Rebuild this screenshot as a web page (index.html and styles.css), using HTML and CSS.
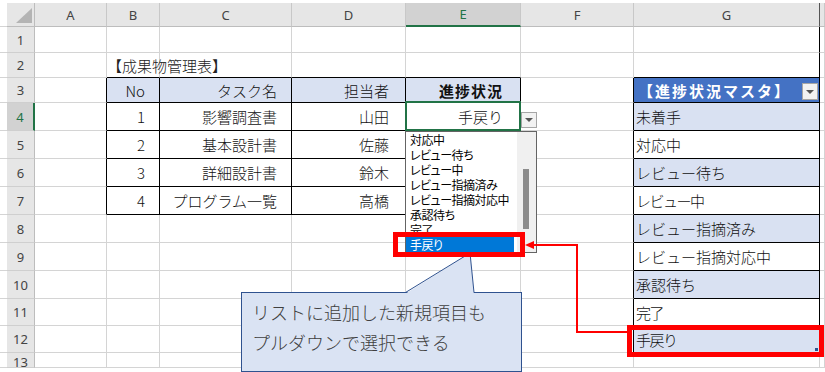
FILE: index.html
```html
<!DOCTYPE html>
<html lang="ja">
<head>
  <meta charset="UTF-8" />
  <meta name="viewport" content="width=device-width, initial-scale=1.0" />
  <title>成果物管理表</title>
  <link rel="stylesheet" href="styles.css">
</head>
<body>
<div class="page">

  <div class="sheet">
    <div class="row hdr">
      <div class="edge"></div>
      <div class="corner"><span></span></div>
      <div class="ch">A</div>
      <div class="ch">B</div>
      <div class="ch">C</div>
      <div class="ch">D</div>
      <div class="ch sel">E</div>
      <div class="ch">F</div>
      <div class="ch g">G</div>
      <div class="ch"></div>
    </div>

    <div class="row h26">
      <div class="edge"></div><div class="rh">1</div>
      <div></div><div></div><div></div><div></div><div></div><div></div><div class="kr"></div><div></div>
    </div>

    <div class="row h25">
      <div class="edge"></div><div class="rh">2</div>
      <div></div>
      <div class="kb title">【成果物管理表】</div>
      <div class="kb"></div><div class="kb"></div><div class="kb"></div>
      <div></div>
      <div class="k"></div>
      <div></div>
    </div>

    <div class="row h25">
      <div class="edge"></div><div class="rh">3</div>
      <div class="kr"></div>
      <div class="k th num">No</div>
      <div class="k th name">タスク名</div>
      <div class="k th who">担当者</div>
      <div class="k th stat bold">進捗状況</div>
      <div class="kr"></div>
      <div class="k master-head">【進捗状況マスタ】<span class="dd"></span></div>
      <div></div>
    </div>

    <div class="row">
      <div class="edge"></div><div class="rh sel">4</div>
      <div class="kr"></div>
      <div class="k num">1</div>
      <div class="k name">影響調査書</div>
      <div class="k who">山田</div>
      <div class="k stat active">手戻り</div>
      <div class="kr"></div>
      <div class="k m band">未着手</div>
      <div></div>
    </div>

    <div class="row">
      <div class="edge"></div><div class="rh">5</div>
      <div class="kr"></div>
      <div class="k num">2</div>
      <div class="k name">基本設計書</div>
      <div class="k who">佐藤</div>
      <div class="k"></div>
      <div class="kr"></div>
      <div class="k m">対応中</div>
      <div></div>
    </div>

    <div class="row">
      <div class="edge"></div><div class="rh">6</div>
      <div class="kr"></div>
      <div class="k num">3</div>
      <div class="k name">詳細設計書</div>
      <div class="k who">鈴木</div>
      <div class="k"></div>
      <div class="kr"></div>
      <div class="k m band">レビュー待ち</div>
      <div></div>
    </div>

    <div class="row">
      <div class="edge"></div><div class="rh">7</div>
      <div class="kr"></div>
      <div class="k num">4</div>
      <div class="k name">プログラム一覧</div>
      <div class="k who">高橋</div>
      <div class="k"></div>
      <div class="kr"></div>
      <div class="k m tight">レビュー中</div>
      <div></div>
    </div>

    <div class="row">
      <div class="edge"></div><div class="rh">8</div>
      <div></div><div></div><div></div><div></div><div></div>
      <div class="kr"></div>
      <div class="k m band">レビュー指摘済み</div>
      <div></div>
    </div>

    <div class="row">
      <div class="edge"></div><div class="rh">9</div>
      <div></div><div></div><div></div><div></div><div></div>
      <div class="kr"></div>
      <div class="k m">レビュー指摘対応中</div>
      <div></div>
    </div>

    <div class="row">
      <div class="edge"></div><div class="rh">10</div>
      <div></div><div></div><div></div><div></div><div></div>
      <div class="kr"></div>
      <div class="k m band">承認待ち</div>
      <div></div>
    </div>

    <div class="row h27">
      <div class="edge"></div><div class="rh">11</div>
      <div></div><div></div><div></div><div></div><div></div>
      <div class="kr"></div>
      <div class="k m tight">完了</div>
      <div></div>
    </div>

    <div class="row h27">
      <div class="edge"></div><div class="rh">12</div>
      <div></div><div></div><div></div><div></div><div></div>
      <div class="kr"></div>
      <div class="k m band tight last">手戻り</div>
      <div></div>
    </div>

    <div class="row h15">
      <div class="edge"></div><div class="rh low">13</div>
      <div></div><div></div><div></div><div></div><div></div><div></div><div></div><div></div>
    </div>
  </div>

  <!-- validation dropdown on E4 -->
  <span class="dd drop-btn"></span>
  <div class="list">
    <ul class="items">
      <li>対応中</li>
      <li>レビュー待ち</li>
      <li>レビュー中</li>
      <li>レビュー指摘済み</li>
      <li>レビュー指摘対応中</li>
      <li>承認待ち</li>
      <li>完了</li>
      <li class="picked">手戻り</li>
    </ul>
    <div class="track"><div class="thumb"></div></div>
  </div>

  <!-- callout -->
  <div class="callout">
    <svg class="tail" width="72" height="43" viewBox="0 0 72 43">
      <polygon points="0,42 65,1 69,42" fill="#dae3f3" />
      <polyline points="0.5,40.5 65,1 69,40.5" fill="none" stroke="#2f528f" stroke-width="1" />
    </svg>
    <p>リストに追加した新規項目も<br>プルダウンで選択できる</p>
  </div>

  <!-- red marks -->
  <svg class="marks" width="825" height="372" viewBox="0 0 825 372">
    <rect x="395.5" y="234.5" width="127" height="20" fill="none" stroke="#ff0000" stroke-width="5" />
    <rect x="629.5" y="327.5" width="192" height="27" fill="none" stroke="#ff0000" stroke-width="5" />
    <path d="M627 332 H577 V245 H532" fill="none" stroke="#ff0000" stroke-width="2" />
    <polygon points="525,245 534,241 534,249" fill="#ff0000" />
  </svg>

</div>
</body>
</html>
```

FILE: styles.css
```css
:root {
  --grid: #d4d4d4;
  --head: #e6e6e6;
  --head-sel: #d2d2d2;
  --green: #217346;
  --band: #d9e1f2;
  --blue: #4472c4;
}
body {
  margin: 0;
  background: #fff;
  font-family: "Noto Sans CJK JP", sans-serif;
}
.page {
  position: relative;
  width: 825px;
  height: 372px;
  overflow: hidden;
}
.sheet {
  padding-top: 3px;
}
.row {
  display: grid;
  grid-template-columns: 7px 28px 72px 53px 132px 114px 115px 113px 186px 5px;
  height: 28px;
}
.row.hdr { height: 24px; }
.row.h26 { height: 26px; }
.row.h25 { height: 25px; }
.row.h27 { height: 27px; }
.row.h15 { height: 15px; }

.row > div {
  box-sizing: border-box;
  border-right: 1px solid var(--grid);
  border-bottom: 1px solid var(--grid);
  display: flex;
  align-items: center;
  white-space: nowrap;
  overflow: hidden;
  font-size: 15px;
  font-weight: 300;
  color: #111;
}
.row > .edge { border-right: none; }

/* headers */
.row > .ch, .row > .rh, .row > .corner {
  background: var(--head);
  justify-content: center;
  font-family: "Noto Sans", sans-serif;
  font-size: 13px;
  font-weight: 400;
  color: #444;
}
.row > .ch { border-right-color: #c8c8c8; border-bottom-color: #bdbdbd; }
.row > .rh { border-right-color: #bdbdbd; border-bottom-color: #cfcfcf; }
.row > .rh.low { align-items: flex-start; }
.row > .ch.g { border-right-color: #555; }
.row > .ch.sel {
  background: var(--head-sel);
  border-bottom: 2px solid var(--green);
  color: var(--green);
}
.row > .rh.sel {
  background: var(--head-sel);
  border-right: 2px solid var(--green);
  color: var(--green);
}
.row > .corner {
  border-right-color: #bdbdbd;
  border-bottom-color: #bdbdbd;
  justify-content: flex-end;
  align-items: flex-end;
  padding: 0 2px 3px 0;
}
.corner span {
  width: 16px;
  height: 15px;
  background: #b4b4b4;
  clip-path: polygon(100% 0, 100% 100%, 0 100%);
}

/* black table borders */
.row > .kr { border-right-color: #000; }
.row > .kb { border-bottom-color: #000; }
.row > .k { border-right-color: #000; border-bottom-color: #000; }

/* data table */
.row > .title { overflow: visible; color: #222; }
.th { background: var(--band); }
.num, .name, .who, .stat { justify-content: flex-end; }
.num { padding-right: 14px; }
.name { padding-right: 14px; }
.who { padding-right: 16px; }
.stat { padding-right: 17px; }
.row > .bold { font-weight: bold; letter-spacing: 1px; }

.row > .active {
  position: relative;
  overflow: visible;
}
.active::after {
  content: "";
  position: absolute;
  left: -1px;
  top: -2px;
  right: -1px;
  bottom: -1px;
  border: 2px solid var(--green);
}

/* master table */
.m { padding-left: 2px; }
.band { background: var(--band); }
.tight { letter-spacing: -1.5px; }
.row > .master-head {
  background: var(--blue);
  color: #fff;
  font-weight: bold;
  letter-spacing: 2px;
  padding-left: 4px;
  justify-content: space-between;
}
.master-head .dd {
  align-self: flex-end;
  margin: 0 1px 2px 0;
  height: 17px;
}
.row > .last { position: relative; }
.last::after {
  content: "";
  position: absolute;
  right: 1px;
  bottom: 1px;
  width: 3px;
  height: 3px;
  background: #2f528f;
}

/* dropdown arrow button */
.dd {
  width: 16px;
  height: 16px;
  box-sizing: border-box;
  border: 1px solid #a6a6a6;
  background: #f2f2f2;
  display: flex;
  align-items: center;
  justify-content: center;
}
.dd::before {
  content: "";
  border-left: 4px solid transparent;
  border-right: 4px solid transparent;
  border-top: 4px solid #555;
}
.drop-btn {
  position: absolute;
  left: 521px;
  top: 112px;
}

/* dropdown list */
.list {
  position: absolute;
  left: 405px;
  top: 131px;
  width: 132px;
  height: 122px;
  box-sizing: border-box;
  border: 1px solid #646464;
  background: #fff;
  display: flex;
  z-index: 2;
}
.items {
  list-style: none;
  margin: 0;
  padding: 0;
  flex: 1;
}
.items li {
  height: 15px;
  line-height: 15px;
  padding-left: 4px;
  font-size: 12px;
  font-feature-settings: "palt";
  letter-spacing: -0.5px;
  color: #000;
  white-space: nowrap;
}
.items li.picked {
  background: #0078d7;
  color: #fff;
  margin-right: 3px;
}
.track {
  width: 19px;
  background: #f0f0f0;
  padding-top: 37px;
  box-sizing: border-box;
}
.thumb {
  width: 6px;
  height: 60px;
  margin-left: 6px;
  background: #8c8c8c;
}

/* callout */
.callout {
  position: absolute;
  left: 241px;
  top: 292px;
  width: 281px;
  height: 80px;
  box-sizing: border-box;
  border: 1px solid #2f528f;
  background: #dae3f3;
  z-index: 2;
}
.callout .tail {
  position: absolute;
  left: 163px;
  top: -41px;
}
.callout p {
  margin: 0;
  padding: 4px 10px;
  font-size: 18px;
  font-weight: 300;
  line-height: 30px;
  color: #404040;
  white-space: nowrap;
}

/* red annotation */
.marks {
  position: absolute;
  left: 0;
  top: 0;
  z-index: 3;
  pointer-events: none;
}
```
